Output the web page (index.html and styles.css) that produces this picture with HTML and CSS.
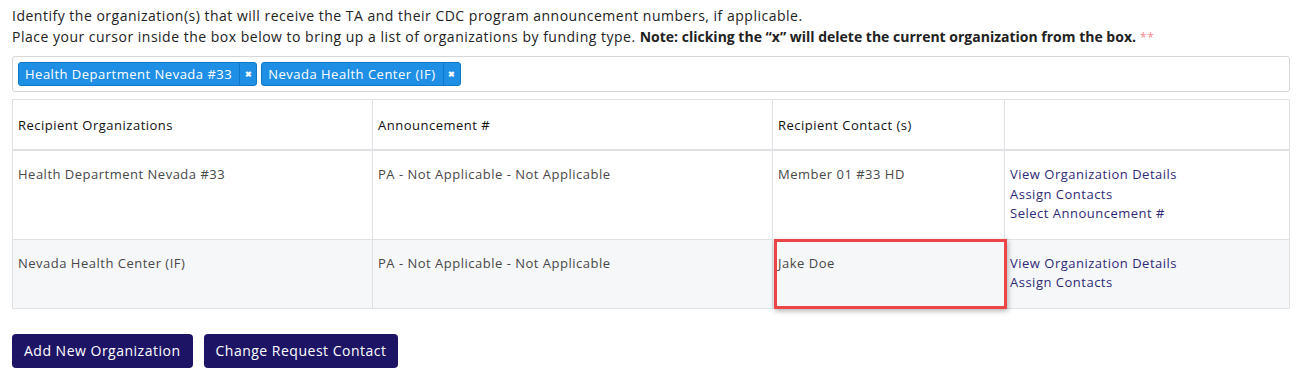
FILE: index.html
```html
<!DOCTYPE html>
<html lang="en">
<head>
    <meta charset="UTF-8">
    <meta name="viewport" content="width=device-width, initial-scale=1.0">
    <title>Recipient Organizations</title>
    <link rel="stylesheet" href="styles.css">
</head>
<body>
    <div class="container">
        <p class="intro">
            Identify the organization(s) that will receive the TA and their CDC program announcement numbers, if applicable.<br>
            Place your cursor inside the box below to bring up a list of organizations by funding type.
            <strong>Note: clicking the &ldquo;x&rdquo; will delete the current organization from the box.</strong>
            <span class="required">**</span>
        </p>

        <div class="tag-box">
            <span class="tag">
                <span class="tag-label">Health Department Nevada #33</span>
                <span class="tag-remove">&#x2716;</span>
            </span>
            <span class="tag">
                <span class="tag-label">Nevada Health Center (IF)</span>
                <span class="tag-remove">&#x2716;</span>
            </span>
        </div>

        <table class="org-table">
            <thead>
                <tr>
                    <th class="col-org">Recipient Organizations</th>
                    <th class="col-ann">Announcement #</th>
                    <th class="col-contact">Recipient Contact (s)</th>
                    <th></th>
                </tr>
            </thead>
            <tbody>
                <tr>
                    <td>Health Department Nevada #33</td>
                    <td>PA - Not Applicable - Not Applicable</td>
                    <td>Member 01 #33 HD</td>
                    <td class="actions">
                        <a href="#">View Organization Details</a>
                        <a href="#">Assign Contacts</a>
                        <a href="#">Select Announcement #</a>
                    </td>
                </tr>
                <tr class="striped">
                    <td>Nevada Health Center (IF)</td>
                    <td>PA - Not Applicable - Not Applicable</td>
                    <td class="highlight">Jake Doe</td>
                    <td class="actions">
                        <a href="#">View Organization Details</a>
                        <a href="#">Assign Contacts</a>
                    </td>
                </tr>
            </tbody>
        </table>

        <div class="buttons">
            <button class="btn">Add New Organization</button>
            <button class="btn">Change Request Contact</button>
        </div>
    </div>
</body>
</html>
```

FILE: styles.css
```css
body {
    margin: 0;
    font-family: "Open Sans", "Liberation Sans", sans-serif;
    color: #222;
    background-color: #fff;
    letter-spacing: 0.5px;
}
.container {
    padding: 5px 14px 0 12px;
}
.intro {
    margin: 0;
    font-size: 14px;
    line-height: 21px;
    color: #222;
}
.intro strong {
    font-weight: 700;
    letter-spacing: 0;
}
.required {
    color: #f08a8a;
    font-size: 12px;
}
.tag-box {
    margin-top: 8px;
    border: 1px solid #d6d6d6;
    border-radius: 3px;
    padding: 5px 5px;
    box-sizing: border-box;
    height: 36px;
    display: flex;
    gap: 4px;
    align-items: flex-start;
}
.tag {
    display: flex;
    height: 24px;
    background-color: #1f8fe5;
    border: 1px solid #0f78c8;
    border-radius: 3px;
    box-sizing: border-box;
    color: #fff;
    font-size: 13px;
    line-height: 22px;
}
.tag-label {
    padding: 0 7px 0 6px;
}
.tag-remove {
    border-left: 1px solid #0f78c8;
    width: 16px;
    text-align: center;
    font-size: 8px;
    font-weight: 700;
    letter-spacing: 0;
}
.org-table {
    margin-top: 7px;
    width: 100%;
    border-collapse: collapse;
    font-size: 13px;
}
.org-table th,
.org-table td {
    border: 1px solid #dfe1e5;
    text-align: left;
    vertical-align: top;
}
.org-table th {
    height: 49px;
    padding: 0 5px;
    vertical-align: middle;
    font-weight: 500;
    color: #111;
    border-bottom: 2px solid #dfe1e5;
}
.org-table td {
    padding: 14px 5px 15px 5px;
    line-height: 19.5px;
    color: #484848;
}
.col-org { width: 349px; }
.col-ann { width: 389px; }
.col-contact { width: 221px; }
.striped td {
    background-color: #f6f7f9;
}
.actions a {
    display: block;
    color: #2f2a77;
    text-decoration: none;
}
.highlight {
    position: relative;
}
.highlight::after {
    content: "";
    position: absolute;
    left: 1px;
    top: -1px;
    right: -3px;
    bottom: -1px;
    border: 3px solid #ea4648;
    box-shadow: 1px 2px 5px rgba(0, 0, 0, 0.3);
}
.buttons {
    margin-top: 25px;
    display: flex;
    gap: 11px;
}
.btn {
    height: 34px;
    padding: 0 12px;
    background-color: #1e1466;
    border: none;
    border-radius: 4px;
    color: #fff;
    font-family: inherit;
    font-size: 14px;
    font-weight: 500;
    letter-spacing: 0.5px;
}
```
